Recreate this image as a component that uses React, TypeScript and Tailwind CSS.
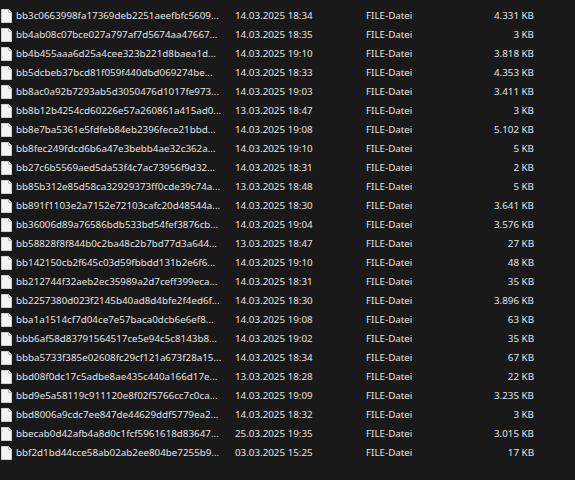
const files = [
  ['bb3c0663998fa17369deb2251aeefbfc5609...', '14.03.2025 18:34', '4.331 KB'],
  ['bb4ab08c07bce027a797af7d5674aa47667...', '14.03.2025 18:35', '3 KB'],
  ['bb4b455aaa6d25a4cee323b221d8baea1d...', '14.03.2025 19:10', '3.818 KB'],
  ['bb5dcbeb37bcd81f059f440dbd069274be...', '14.03.2025 18:33', '4.353 KB'],
  ['bb8ac0a92b7293ab5d3050476d1017fe973...', '14.03.2025 19:03', '3.411 KB'],
  ['bb8b12b4254cd60226e57a260861a415ad0...', '13.03.2025 18:47', '3 KB'],
  ['bb8e7ba5361e5fdfeb84eb2396fece21bbd...', '14.03.2025 19:08', '5.102 KB'],
  ['bb8fec249fdcd6b6a47e3bebb4ae32c362a...', '14.03.2025 19:10', '5 KB'],
  ['bb27c6b5569aed5da53f4c7ac73956f9d32...', '14.03.2025 18:31', '2 KB'],
  ['bb85b312e85d58ca32929373ff0cde39c74a...', '13.03.2025 18:48', '5 KB'],
  ['bb891f1103e2a7152e72103cafc20d48544a...', '14.03.2025 18:30', '3.641 KB'],
  ['bb36006d89a76586bdb533bd54fef3876cb...', '14.03.2025 19:04', '3.576 KB'],
  ['bb58828f8f844b0c2ba48c2b7bd77d3a644...', '13.03.2025 18:47', '27 KB'],
  ['bb142150cb2f645c03d59fbbdd131b2e6f6...', '14.03.2025 19:10', '48 KB'],
  ['bb212744f32aeb2ec35989a2d7ceff399eca...', '14.03.2025 18:31', '35 KB'],
  ['bb2257380d023f2145b40ad8d4bfe2f4ed6f...', '14.03.2025 18:30', '3.896 KB'],
  ['bba1a1514cf7d04ce7e57baca0dcb6e6ef8...', '14.03.2025 19:08', '63 KB'],
  ['bbb6af58d83791564517ce5e94c5c8143b8...', '14.03.2025 19:02', '35 KB'],
  ['bbba5733f385e02608fc29cf121a673f28a15...', '14.03.2025 18:34', '67 KB'],
  ['bbd08f0dc17c5adbe8ae435c440a166d17e...', '13.03.2025 18:28', '22 KB'],
  ['bbd9e5a58119c911120e8f02f5766cc7c0ca...', '14.03.2025 19:09', '3.235 KB'],
  ['bbd8006a9cdc7ee847de44629ddf5779ea2...', '14.03.2025 18:32', '3 KB'],
  ['bbecab0d42afb4a8d0c1fcf5961618d83647...', '25.03.2025 19:35', '3.015 KB'],
  ['bbf2d1bd44cce58ab02ab2ee804be7255b9...', '03.03.2025 15:25', '17 KB'],
];

function FileIcon() {
  return (
    <svg width="11" height="14" viewBox="0 0 11 14" className="shrink-0">
      <path d="M0.5 0.5 H7.5 L10.5 3.5 V13.5 H0.5 Z" fill="#f4f4f4" stroke="#cfcfcf" strokeWidth="1" />
      <path d="M7.5 0.5 V3.5 H10.5" fill="none" stroke="#bdbdbd" strokeWidth="1" />
    </svg>
  );
}

export default function App() {
  return (
    <div className="w-[575px] h-[480px] bg-[#191919] text-[#e2e2e2] text-[9.8px] pt-[6px] overflow-hidden" style={{ fontFamily: '"Noto Sans", "Open Sans", sans-serif' }}>
      {files.map(([name, date, size]) => (
        <div key={name} className="flex items-center h-[19px] leading-none">
          <div className="w-[16px] pl-[1px] flex items-center">
            <FileIcon />
          </div>
          <div className="w-[219px] whitespace-nowrap">{name}</div>
          <div className="w-[131px] whitespace-nowrap">{date}</div>
          <div className="w-[100px] whitespace-nowrap">FILE-Datei</div>
          <div className="w-[68px] text-right whitespace-nowrap">{size}</div>
        </div>
      ))}
    </div>
  );
}
